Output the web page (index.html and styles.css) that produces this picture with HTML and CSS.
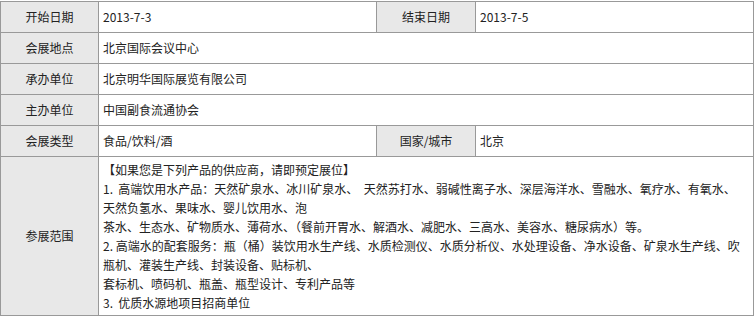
FILE: index.html
```html
<!DOCTYPE html>
<html lang="zh-CN">
<head>
<meta charset="utf-8">
<title>展会信息</title>
<link rel="stylesheet" href="styles.css">
</head>
<body>
<table class="info">
  <colgroup>
    <col class="c-label">
    <col class="c-value">
    <col class="c-label2">
    <col class="c-value2">
  </colgroup>
  <tr>
    <td class="label">开始日期</td>
    <td class="value">2013-7-3</td>
    <td class="label">结束日期</td>
    <td class="value">2013-7-5</td>
  </tr>
  <tr>
    <td class="label">会展地点</td>
    <td class="value" colspan="3">北京国际会议中心</td>
  </tr>
  <tr>
    <td class="label">承办单位</td>
    <td class="value" colspan="3">北京明华国际展览有限公司</td>
  </tr>
  <tr>
    <td class="label">主办单位</td>
    <td class="value" colspan="3">中国副食流通协会</td>
  </tr>
  <tr>
    <td class="label">会展类型</td>
    <td class="value">食品/饮料/酒</td>
    <td class="label">国家/城市</td>
    <td class="value">北京</td>
  </tr>
  <tr>
    <td class="label">参展范围</td>
    <td class="value scope" colspan="3">
      <div class="line">【如果您是下列产品的供应商，请即预定展位】</div>
      <div class="line">1.&nbsp; 高端饮用水产品：天然矿泉水、冰川矿泉水、&nbsp; 天然苏打水、弱碱性离子水、深层海洋水、雪融水、氧疗水、有氧水、</div>
      <div class="line">天然负氢水、果味水、婴儿饮用水、泡</div>
      <div class="line">茶水、生态水、矿物质水、薄荷水、（餐前开胃水、解酒水、减肥水、三高水、美容水、糖尿病水）等。</div>
      <div class="line">2. 高端水的配套服务：瓶（桶）装饮用水生产线、水质检测仪、水质分析仪、水处理设备、净水设备、矿泉水生产线、吹</div>
      <div class="line">瓶机、灌装生产线、封装设备、贴标机、</div>
      <div class="line">套标机、喷码机、瓶盖、瓶型设计、专利产品等</div>
      <div class="line">3.&nbsp; 优质水源地项目招商单位</div>
    </td>
  </tr>
</table>
</body>
</html>
```

FILE: styles.css
```css
html, body {
  margin: 0;
  padding: 0;
  background: #ffffff;
}

body {
  padding-top: 1px;
  font-family: SimSun, "Noto Sans CJK SC", sans-serif;
  font-size: 12px;
  color: #222222;
}

.info {
  border-collapse: collapse;
  table-layout: fixed;
  width: 753px;
}

.c-label { width: 98px; }
.c-value { width: 278px; }
.c-label2 { width: 99px; }
.c-value2 { width: 278px; }

.info td {
  border: 1px solid #999999;
  height: 30px;
  padding: 0 4px;
  line-height: 16px;
  vertical-align: middle;
  white-space: nowrap;
}

.info td.label {
  background: #e8e8e8;
  text-align: center;
  padding: 0;
}

.info td.scope {
  height: auto;
  padding: 3px 4px 3px 4px;
}

.scope .line {
  line-height: 19px;
  white-space: nowrap;
}
```
